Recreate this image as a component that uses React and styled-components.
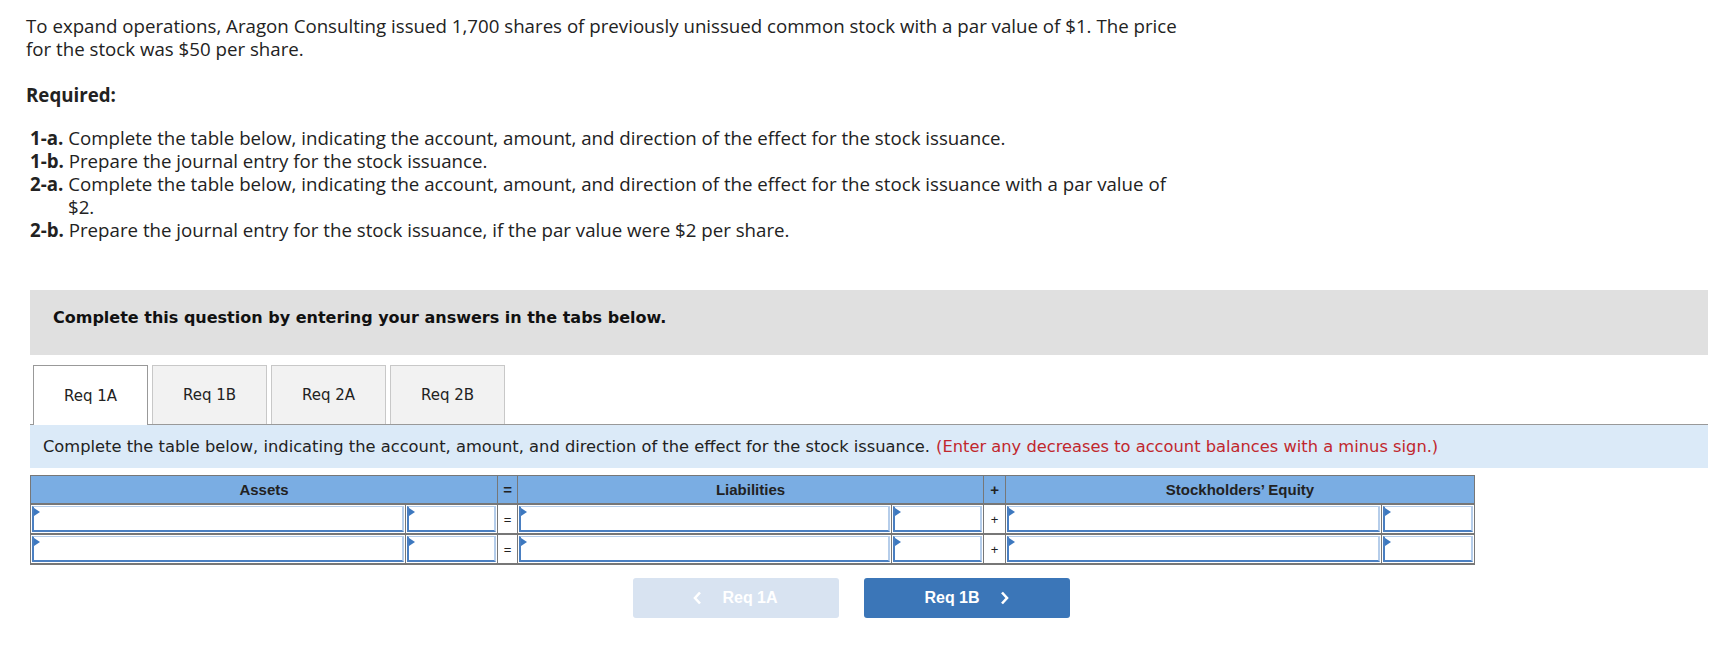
import React from 'react'
import styled, { createGlobalStyle } from 'styled-components'

const GlobalStyle = createGlobalStyle`
  body {
    margin: 0;
    background: #fff;
  }
`

const Page = styled.div`
  padding: 14px 9px 40px 26px;
  font-family: 'Open Sans', Lato, sans-serif;
  color: #222;
`

const Question = styled.p`
  margin: 0;
  font-size: 18.7px;
  line-height: 23px;
`

const Required = styled.div`
  margin-top: 23px;
  font-size: 18.7px;
  line-height: 23px;
  font-weight: 700;
`

const ReqList = styled.ul`
  list-style: none;
  margin: 20px 0 0 4px;
  padding: 0;
  font-size: 18.7px;
  line-height: 23px;
`

const ReqItem = styled.li`
  padding-left: 38px;
  text-indent: -38px;

  b {
    font-weight: 700;
  }
`

const Panel = styled.section`
  margin: 49px 0 0 4px;
`

const GrayBar = styled.div`
  height: 65px;
  box-sizing: border-box;
  display: flex;
  align-items: center;
  padding: 0 0 10px 23px;
  background: #e0e0e0;
  font-family: 'DejaVu Sans', Verdana, sans-serif;
  font-weight: 700;
  font-size: 16px;
  color: #111;
`

const TabRow = styled.div`
  display: flex;
  gap: 4px;
  margin-top: 10px;
  padding-left: 3px;
  border-bottom: 1px solid #999;
`

const Tab = styled.div`
  box-sizing: border-box;
  width: 115px;
  height: ${p => (p.$active ? '60px' : '59px')};
  margin-bottom: ${p => (p.$active ? '-1px' : '0')};
  display: flex;
  align-items: center;
  justify-content: center;
  background: ${p => (p.$active ? '#fff' : '#f2f2f2')};
  border: 1px solid ${p => (p.$active ? '#999' : '#c8c8c8')};
  border-bottom: none;
  font-family: 'DejaVu Sans', Verdana, sans-serif;
  font-size: 15px;
  color: #222;
`

const InfoBar = styled.div`
  height: 43px;
  display: flex;
  align-items: center;
  padding-left: 13px;
  background: #dbeaf8;
  font-family: 'DejaVu Sans', Verdana, sans-serif;
  font-size: 16.3px;
  color: #222;
  white-space: nowrap;

  span {
    color: #c1272d;
    margin-left: 6px;
  }
`

const Table = styled.table`
  margin-top: 7px;
  border-collapse: collapse;
  table-layout: fixed;
  width: 1444px;
  border: 1px solid #777;
`

const Head = styled.th`
  height: 27px;
  padding: 0;
  background: #7aade3;
  border: 1px solid #777;
  border-bottom-width: 2px;
  font-family: 'Liberation Sans', Arial, sans-serif;
  font-size: 15px;
  font-weight: 700;
  color: #222;
  text-align: center;
`

const Cell = styled.td`
  position: relative;
  height: 26px;
  padding: 1px;
  background: #fff;
  border: 1px solid #777;
  border-bottom-width: 2px;
`

const Sign = styled.td`
  padding: 0;
  background: #fff;
  border: 1px solid #777;
  border-bottom-width: 2px;
  text-align: center;
  font-family: 'Liberation Sans', Arial, sans-serif;
  font-size: 13px;
  color: #222;
`

const Field = styled.input`
  display: block;
  box-sizing: border-box;
  width: 100%;
  height: 26px;
  margin: 0;
  padding: 0 6px;
  background: #fff;
  border-top: 1px solid #b5cdea;
  border-right: 2px solid #b5cdea;
  border-left: 2px solid #4a7fc1;
  border-bottom: 2px solid #4a7fc1;
  outline: none;
  font-family: 'Liberation Sans', Arial, sans-serif;
  font-size: 14px;
`

const Marker = styled.span`
  position: absolute;
  top: 3px;
  left: 3px;
  width: 0;
  height: 0;
  border-left: 6px solid #3d78bf;
  border-top: 4px solid transparent;
  border-bottom: 4px solid transparent;
`

const NavRow = styled.div`
  display: flex;
  justify-content: center;
  gap: 25px;
  margin-top: 13px;
  padding-right: 36px;
`

const NavButton = styled.button`
  width: 206px;
  height: 40px;
  display: flex;
  align-items: center;
  justify-content: center;
  gap: 20px;
  border: none;
  border-radius: 3px;
  background: ${p => (p.$disabled ? '#d8e3f1' : '#3b76b8')};
  color: #fff;
  font-family: 'Liberation Sans', Arial, sans-serif;
  font-size: 16px;
  font-weight: 700;
  cursor: ${p => (p.$disabled ? 'default' : 'pointer')};
`

const Chevron = ({ dir }) => (
  <svg width="9" height="14" viewBox="0 0 9 14">
    <polyline
      points={dir === 'left' ? '7,1.5 2,7 7,12.5' : '2,1.5 7,7 2,12.5'}
      fill="none"
      stroke="#fff"
      strokeWidth="2.6"
    />
  </svg>
)

const tabs = ['Req 1A', 'Req 1B', 'Req 2A', 'Req 2B']
const rows = [
  ['=', '+'],
  ['=', '+'],
]

const InputCell = () => (
  <Cell>
    <Field />
    <Marker />
  </Cell>
)

export default function App() {
  return (
    <Page>
      <GlobalStyle />
      <Question>
        To expand operations, Aragon Consulting issued 1,700 shares of previously unissued common stock with a par value of $1. The price
        <br />
        for the stock was $50 per share.
      </Question>

      <Required>Required:</Required>
      <ReqList>
        <ReqItem><b>1-a.</b> Complete the table below, indicating the account, amount, and direction of the effect for the stock issuance.</ReqItem>
        <ReqItem><b>1-b.</b> Prepare the journal entry for the stock issuance.</ReqItem>
        <ReqItem>
          <b>2-a.</b> Complete the table below, indicating the account, amount, and direction of the effect for the stock issuance with a par value of
          <br />
          $2.
        </ReqItem>
        <ReqItem><b>2-b.</b> Prepare the journal entry for the stock issuance, if the par value were $2 per share.</ReqItem>
      </ReqList>

      <Panel>
        <GrayBar>Complete this question by entering your answers in the tabs below.</GrayBar>
        <TabRow>
          {tabs.map((t, i) => (
            <Tab key={t} $active={i === 0}>{t}</Tab>
          ))}
        </TabRow>
        <InfoBar>
          Complete the table below, indicating the account, amount, and direction of the effect for the stock issuance.
          <span>(Enter any decreases to account balances with a minus sign.)</span>
        </InfoBar>

        <Table>
          <colgroup>
            <col style={{ width: 375 }} />
            <col style={{ width: 92 }} />
            <col style={{ width: 20 }} />
            <col style={{ width: 374 }} />
            <col style={{ width: 92 }} />
            <col style={{ width: 22 }} />
            <col style={{ width: 376 }} />
            <col style={{ width: 93 }} />
          </colgroup>
          <thead>
            <tr>
              <Head colSpan={2}>Assets</Head>
              <Head>=</Head>
              <Head colSpan={2}>Liabilities</Head>
              <Head>+</Head>
              <Head colSpan={2}>Stockholders’ Equity</Head>
            </tr>
          </thead>
          <tbody>
            {rows.map((r, i) => (
              <tr key={i}>
                <InputCell />
                <InputCell />
                <Sign>{r[0]}</Sign>
                <InputCell />
                <InputCell />
                <Sign>{r[1]}</Sign>
                <InputCell />
                <InputCell />
              </tr>
            ))}
          </tbody>
        </Table>

        <NavRow>
          <NavButton $disabled>
            <Chevron dir="left" />
            Req 1A
          </NavButton>
          <NavButton>
            Req 1B
            <Chevron dir="right" />
          </NavButton>
        </NavRow>
      </Panel>
    </Page>
  )
}
